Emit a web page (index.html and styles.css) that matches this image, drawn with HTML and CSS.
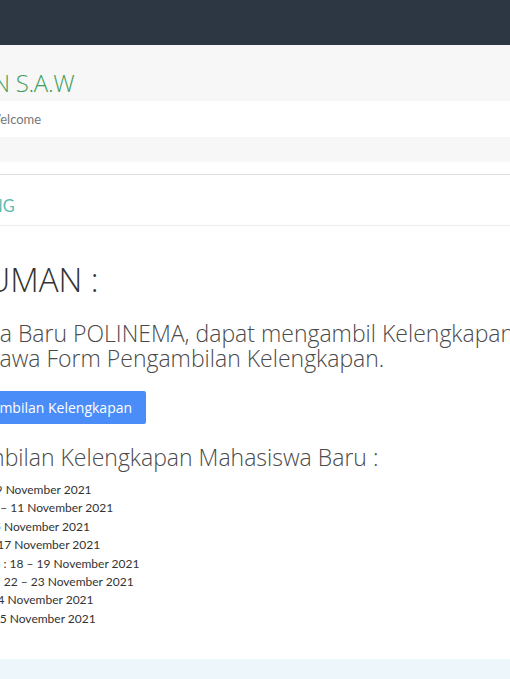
FILE: index.html
```html
<!DOCTYPE html>
<html lang="id">
<head>
<meta charset="utf-8">
<title>Pengumuman</title>
<link rel="stylesheet" href="styles.css">
</head>
<body>
<header class="topbar"></header>

<section class="pagehead">
  <div class="pagehead-inner">
    <h1 class="apptitle">PEMILIHAN S.A.W</h1>
  </div>
  <div class="crumbbar">
    <ol class="crumbs">
      <li>Dashboard</li>
      <li class="sep">/</li>
      <li>Welcome</li>
    </ol>
  </div>
</section>

<main class="content">
  <div class="card">
    <div class="card-head">
      <h2 class="card-title">INFO DAFTAR ULANG</h2>
    </div>
    <div class="card-body">
      <h1 class="announce">PENGUMUMAN :</h1>
      <p class="lead">Bagi Mahasiswa Baru POLINEMA, dapat mengambil Kelengkapan Mahasiswa Baru di Gedung AH Lantai 1<br>dengan membawa Form Pengambilan Kelengkapan.</p>
      <a class="btn" href="#"><svg class="btn-icon" viewBox="0 0 12 12" width="9" height="11" aria-hidden="true"><path d="M6 1v7M3 5l3 3 3-3M1.5 10.5h9" fill="none" stroke="#fff" stroke-width="1.4"/></svg>Unduh Form Pengambilan Kelengkapan</a>
      <h3 class="subhead">Jadwal Pengambilan Kelengkapan Mahasiswa Baru :</h3>
      <ul class="schedule">
        <li>Jurusan Teknik Elektro : 8 – 9 November 2021</li>
        <li>Manajemen Informatika : 10 – 11 November 2021</li>
        <li>Jurusan Teknik Sipil : 12 – 15 November 2021</li>
        <li>Jurusan Teknik Mesin : 16 – 17 November 2021</li>
        <li>Jurusan Akuntansi dan Niaga : 18 – 19 November 2021</li>
        <li>Jurusan Teknologi Informasi : 22 – 23 November 2021</li>
        <li>Mahasiswa Pasca Sarjana : 24 November 2021</li>
        <li>Mahasiswa PSDKU Kediri : 25 November 2021</li>
      </ul>
    </div>
  </div>
  <div class="card-next"></div>
</main>
</body>
</html>
```
FILE: styles.css
```css
html, body {
  overflow: hidden;
}
body {
  margin: 0;
  background: #fff;
  font-family: "Open Sans", "Noto Sans", sans-serif;
  color: #333;
}

.topbar {
  height: 45px;
  background: #2d3743;
}

.pagehead {
  background: #f7f7f7;
  padding: 22px 0 25px;
}
.pagehead-inner {
  margin-left: -109px;
}
.apptitle {
  margin: 0;
  font-weight: 300;
  font-size: 24px;
  line-height: 32px;
  letter-spacing: -0.3px;
  color: #419f5f;
  white-space: nowrap;
}
.crumbbar {
  margin-top: 2px;
  background: #fff;
  height: 36px;
}
.crumbs {
  display: flex;
  margin: 0 0 0 -109px;
  padding: 0 0 0 22px;
  list-style: none;
  font-family: Lato, "Liberation Sans", sans-serif;
  font-size: 13px;
  line-height: 36px;
  color: #777;
  white-space: pre;
}
.crumbs .sep::before,
.crumbs .sep::after {
  content: " ";
}

.content {
  margin: 12px 0 0 -171px;
  width: 1200px;
}
.card {
  border-top: 1px solid #dcdcdc;
  padding: 0 20px;
}
.card-head {
  height: 50px;
  border-bottom: 1px solid #ececec;
}
.card-title {
  margin: 0;
  padding-top: 21px;
  font-family: Lato, "Liberation Sans", sans-serif;
  font-weight: 400;
  font-size: 16.35px;
  line-height: 20px;
  color: #5dbbb1;
}
.card-body {
  padding: 34px 0 31px;
}
.announce {
  margin: 0;
  font-weight: 300;
  font-size: 33px;
  line-height: 40px;
  color: #333;
  white-space: nowrap;
}
.lead {
  margin: 21px 0 0;
  font-weight: 300;
  font-size: 23px;
  line-height: 25px;
  color: #4a4a4a;
  white-space: nowrap;
}
.btn {
  display: inline-flex;
  align-items: center;
  gap: 2px;
  margin-top: 20px;
  padding: 6px 14px 6px 13px;
  border-radius: 2px;
  background: #4a8df8;
  color: #fff;
  font-weight: 500;
  font-size: 14px;
  line-height: 21px;
  text-decoration: none;
}
.btn-icon {
  flex: none;
}
.subhead {
  margin: 21px 0 0;
  font-weight: 300;
  font-size: 23px;
  line-height: 25px;
  color: #4a4a4a;
  white-space: nowrap;
}
.schedule {
  margin: 11px 0 0;
  padding: 0;
  list-style: none;
  font-family: Lato, "Liberation Sans", sans-serif;
  font-size: 12px;
  line-height: 18.4px;
  color: #333;
  white-space: nowrap;
}

.card-next {
  height: 20px;
  background: #edf6fb;
  border-bottom: 1px solid #d6d6d6;
}
```
